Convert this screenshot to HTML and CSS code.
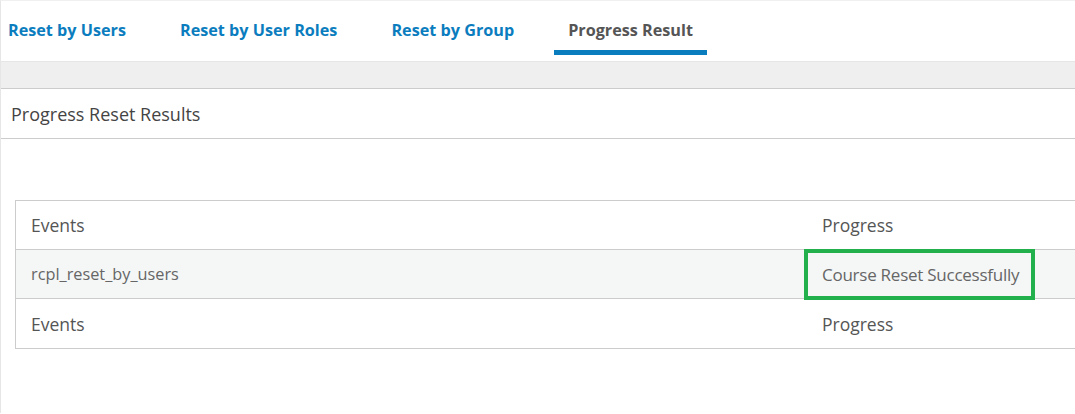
FILE: index.html
```html
<!DOCTYPE html>
<html>
<head>
<meta charset="utf-8">
<link rel="stylesheet" href="styles.css">
</head>
<body>
<div class="page">
  <nav class="tabs">
    <a class="tab">Reset by Users</a>
    <a class="tab">Reset by User Roles</a>
    <a class="tab">Reset by Group</a>
    <a class="tab active">Progress Result</a>
  </nav>
  <div class="band"></div>
  <div class="panel">
    <div class="panel-title">Progress Reset Results</div>
    <div class="panel-body">
      <table class="results">
        <tr><td class="c1">Events</td><td class="c2">Progress</td></tr>
        <tr class="alt"><td class="c1 muted">rcpl_reset_by_users</td><td class="c2 muted"><span class="hl">Course Reset Successfully</span></td></tr>
        <tr class="last"><td class="c1">Events</td><td class="c2">Progress</td></tr>
      </table>
    </div>
  </div>
</div>
</body>
</html>
```
FILE: styles.css
```css
html, body {
  margin: 0;
  padding: 0;
  background: #fff;
}
body {
  font-family: "Open Sans", "Noto Sans", sans-serif;
  width: 1075px;
  height: 414px;
  overflow: hidden;
}
.page {
  border-top: 1px solid #f0f0f0;
  border-left: 1px solid #e6e6e6;
  height: 413px;
  box-sizing: border-box;
}
.tabs {
  display: flex;
  gap: 26px;
  height: 54px;
}
.tab {
  padding: 8px 14px 0;
  height: 41px;
  display: flex;
  align-items: center;
  font-size: 16.2px;
  font-weight: 700;
  color: #0b7dbe;
  border-bottom: 5px solid transparent;
}
.tab:first-child { padding-left: 7px; }
.tab.active {
  color: #555;
  border-bottom-color: #0a7dbe;
}
.band {
  margin-top: 6px;
  height: 26px;
  background: #efefef;
  border-top: 1px solid #e6e6e6;
  border-bottom: 1px solid #cccccc;
}
.panel-title {
  height: 49px;
  padding-left: 10px;
  display: flex;
  align-items: center;
  font-size: 18px;
  color: #444;
  border-bottom: 1px solid #cccccc;
}
.panel-body {
  padding: 61px 0 0 14px;
}
.results {
  border-collapse: collapse;
  width: 1100px;
  font-size: 17.5px;
  color: #555;
}
.results td {
  height: 48px;
  padding: 0 0 0 15px;
  border: 1px solid #cccccc;
  border-right: none;
  vertical-align: middle;
}
.results tr.last td {
  height: 49px;
}
.results td.c1 {
  width: 776px;
}
.results td.c2 {
  border-left: none;
}
.results tr.alt td {
  background: #f5f7f7;
}
.results td.muted {
  color: #666;
  font-size: 17px;
}
.results td.c1.muted {
  font-size: 16.3px;
}
.results td.c2.muted {
  letter-spacing: -0.25px;
}
.hl {
  position: relative;
}
.hl::before {
  content: "";
  position: absolute;
  left: -18px;
  right: -16px;
  top: -14px;
  bottom: -14px;
  border: 4px solid #21b04b;
}
```
